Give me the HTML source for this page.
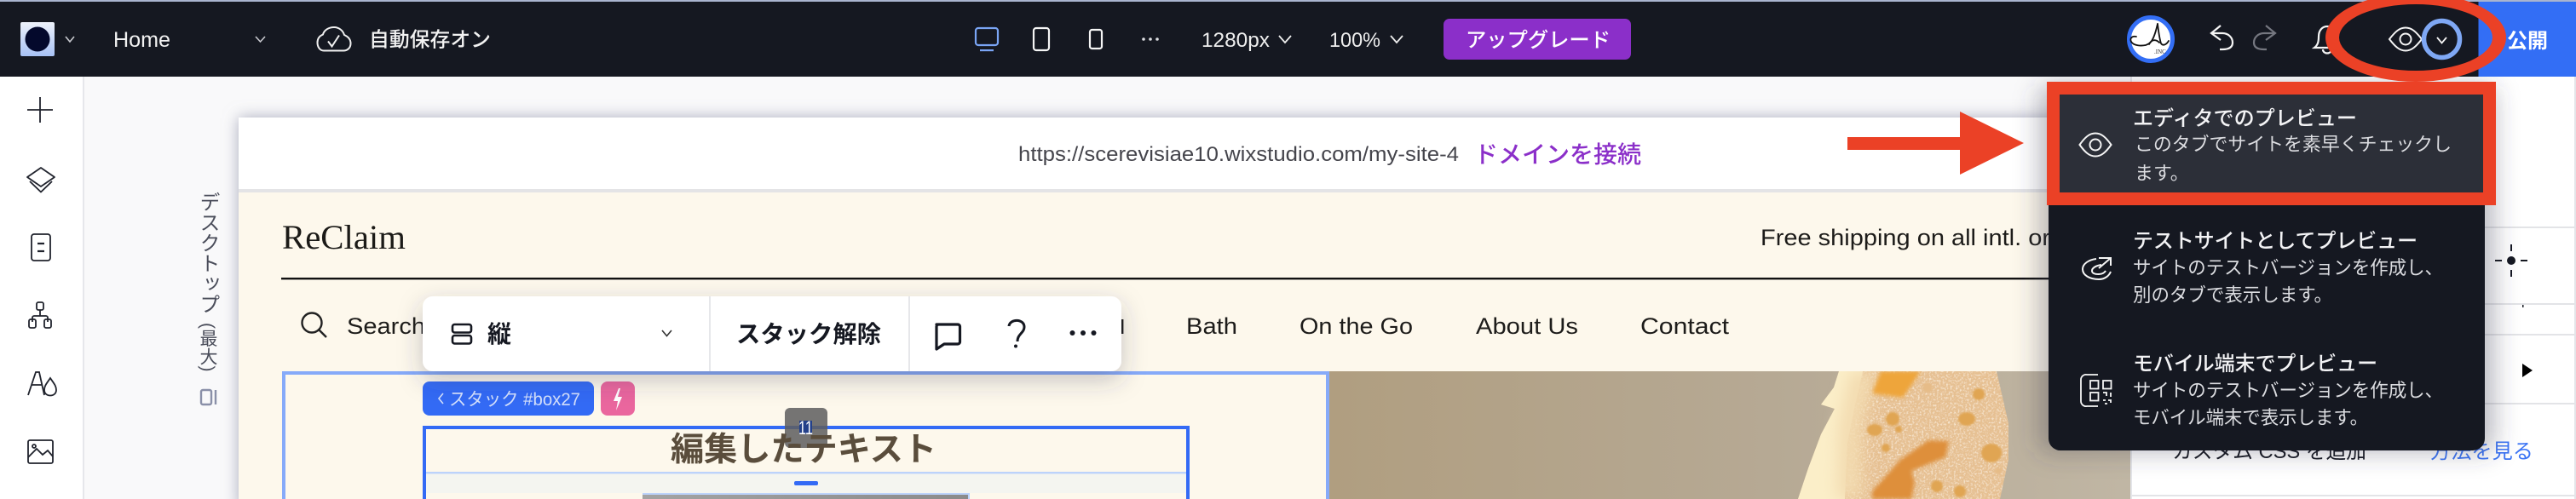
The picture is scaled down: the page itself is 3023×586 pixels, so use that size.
<!DOCTYPE html>
<html lang="ja">
<head>
<meta charset="utf-8">
<title>Editor preview</title>
<style>
html,body{margin:0;padding:0;background:#fff;width:3023px;height:586px;overflow:hidden}
svg{position:absolute;left:0;top:0;display:block}
text{font-family:"Liberation Sans","Noto Sans CJK JP",sans-serif}
.v{position:absolute;left:228px;top:225px;writing-mode:vertical-rl;font:24px/30px "Liberation Sans","Noto Sans CJK JP",sans-serif;color:#4a4d5a;white-space:nowrap}
.v span{font-size:21px;margin-top:10px;letter-spacing:.5px}
</style>
</head>
<body>
<svg width="3023" height="586" viewBox="0 0 3023 586" xmlns="http://www.w3.org/2000/svg">
<defs>
<filter id="fs" x="-5%" y="-20%" width="110%" height="140%"><feDropShadow dx="0" dy="0" stdDeviation="9" flood-color="#8f91a8" flood-opacity=".75"/></filter>
<filter id="ts" x="-15%" y="-40%" width="130%" height="200%"><feDropShadow dx="0" dy="10" stdDeviation="14" flood-color="#3a3d50" flood-opacity=".28"/></filter>
<filter id="ms" x="-15%" y="-15%" width="130%" height="130%"><feGaussianBlur stdDeviation="14"/></filter>
<filter id="b1"><feGaussianBlur stdDeviation="1"/></filter>
<filter id="b2"><feGaussianBlur stdDeviation="2.5"/></filter>
<filter id="b5" x="-60%" y="-20%" width="220%" height="140%"><feGaussianBlur stdDeviation="9"/></filter>
<filter id="grain" x="0" y="0" width="100%" height="100%"><feTurbulence type="fractalNoise" baseFrequency=".45" numOctaves="2" seed="4" result="n"/><feColorMatrix in="n" type="matrix" values="0 0 0 0 1 0 0 0 0 .93 0 0 0 0 .8 0 0 0 2 -.95" result="g"/><feComposite in="g" in2="SourceAlpha" operator="in" result="g2"/><feMerge><feMergeNode in="SourceGraphic"/><feMergeNode in="g2"/></feMerge></filter>
<linearGradient id="lg" x1="0" y1="0" x2="0" y2="1"><stop offset="0" stop-color="#eef2fb"/><stop offset="1" stop-color="#a8c2f5"/></linearGradient>
<linearGradient id="bgimg" x1="0" y1="0" x2="1" y2="0"><stop offset="0" stop-color="#b09e80"/><stop offset=".55" stop-color="#b6a994"/><stop offset="1" stop-color="#c0b6a4"/></linearGradient>
<linearGradient id="grey" x1="0" y1="0" x2="1" y2="0"><stop offset="0" stop-color="#a3a3a3"/><stop offset="1" stop-color="#8b8b8b"/></linearGradient>
<clipPath id="clipimg"><rect x="1559" y="436" width="941" height="150"/></clipPath>
</defs>

<!-- canvas -->
<rect width="3023" height="586" fill="#f9f9fa"/>
<!-- left rail -->
<rect x="0" y="90" width="97" height="496" fill="#fff"/>
<rect x="97" y="90" width="2" height="496" fill="#e6e7eb"/>

<!-- site frame -->
<rect x="280" y="138" width="2225" height="460" fill="#fff" filter="url(#fs)"/>
<rect x="280" y="138" width="2225" height="84" fill="#fff"/>
<rect x="280" y="222" width="2225" height="4" fill="#e4e4e6"/>
<rect x="280" y="226" width="2225" height="360" fill="#fdf8ec"/>

<text x="1195" y="189" font-size="24" fill="#45454c" textLength="517" lengthAdjust="spacingAndGlyphs">https://scerevisiae10.wixstudio.com/my-site-4</text>
<text x="1730" y="191" font-size="28" font-weight="500" fill="#8b2fc9" textLength="196" lengthAdjust="spacingAndGlyphs">ドメインを接続</text>

<text x="331" y="292" font-size="40" fill="#1b1a17" style="font-family:'Liberation Serif',serif" textLength="145" lengthAdjust="spacingAndGlyphs">ReClaim</text>
<text x="2066" y="288" font-size="27" fill="#1d1c1a" textLength="340" lengthAdjust="spacingAndGlyphs">Free shipping on all intl. or</text>
<rect x="330" y="326" width="2170" height="2.4" fill="#111"/>

<!-- nav -->
<g fill="none" stroke="#222" stroke-width="2.4"><circle cx="366" cy="379" r="11.5"/><path d="M374.5 387.5L383 396"/></g>
<text x="407" y="392" font-size="27" fill="#1d1c1a" textLength="92" lengthAdjust="spacingAndGlyphs">Search</text>
<text x="1392" y="392" font-size="27" fill="#1d1c1a" textLength="60" lengthAdjust="spacingAndGlyphs">Bath</text>
<text x="1525" y="392" font-size="27" fill="#1d1c1a" textLength="133" lengthAdjust="spacingAndGlyphs">On the Go</text>
<text x="1732" y="392" font-size="27" fill="#1d1c1a" textLength="120" lengthAdjust="spacingAndGlyphs">About Us</text>
<text x="1925" y="392" font-size="27" fill="#1d1c1a" textLength="104" lengthAdjust="spacingAndGlyphs">Contact</text>
<rect x="1316" y="375" width="2.4" height="17" fill="#1d1c1a"/>

<!-- hero image -->
<g clip-path="url(#clipimg)">
<rect x="1559" y="436" width="941" height="150" fill="url(#bgimg)"/>
<path d="M2158 436L2152 455 2137 475 2153 480 2137 510 2122 550 2110 586H2347L2357 540 2357 497 2343 436Z" fill="#e6c092" filter="url(#grain)"/>
<path d="M2158 436L2152 455 2137 475 2153 480 2137 510 2122 550 2110 586H2165L2168 520 2176 480 2186 436Z" fill="#fbeec8"/>
<path d="M2172 436L2158 500 2156 586H2184L2184 500 2202 436Z" fill="#f3dbb0" filter="url(#b5)"/>
<path d="M2207 436L2197 462 2233 467 2246 448 2254 436Z" fill="#eea53b" filter="url(#b2)"/>
<path d="M2287 518L2263 517 2230 540 2197 577V586H2243L2247 567 2243 553 2283 537Z" fill="#de8f3b" filter="url(#b2)"/>
<g fill="#e0a552" filter="url(#b1)">
<ellipse cx="2308" cy="492" rx="10" ry="8"/><ellipse cx="2221" cy="492" rx="8" ry="8"/><ellipse cx="2200" cy="505" rx="9" ry="7"/><circle cx="2228" cy="504" r="4"/><ellipse cx="2337" cy="532" rx="12" ry="11"/><circle cx="2273" cy="571" r="7"/><circle cx="2300" cy="577" r="7"/><circle cx="2322" cy="463" r="7"/><circle cx="2213" cy="526" r="5"/><circle cx="2345" cy="553" r="4" fill="#e6bc88"/><circle cx="2262" cy="455" r="6" fill="#e6bc88"/>
</g>
</g>

<!-- selection frames -->
<rect x="333" y="438" width="1225" height="160" fill="none" stroke="#86aaf9" stroke-width="4"/>
<rect x="498" y="502" width="896" height="100" fill="none" stroke="#336af5" stroke-width="4"/>
<rect x="500" y="556" width="892" height="23" fill="#f4f5f0"/>
<rect x="500" y="554" width="892" height="2.4" fill="#bcd3fb"/>
<rect x="932" y="565" width="28" height="5" rx="2" fill="#336af5"/>
<rect x="754" y="579" width="383" height="12" fill="url(#grey)"/>
<path d="M754 580H1137V590" fill="none" stroke="#bcd3fb" stroke-width="2"/>
<rect x="921" y="479" width="50" height="47" rx="6" fill="#5e5e5e" fill-opacity=".86"/>
<rect x="938" y="494" width="15" height="16" fill="#23408a"/>
<text x="787" y="541" font-size="39" font-weight="700" fill="#5a4d3c" textLength="312" lengthAdjust="spacingAndGlyphs">編集したテキスト</text>
<text x="937" y="510" font-size="22" fill="#fff" textLength="17" lengthAdjust="spacingAndGlyphs">11</text>

<!-- tags -->
<rect x="496" y="448" width="201" height="40" rx="8" fill="#336af5"/>
<path d="M520 462l-5 6 5 6" fill="none" stroke="#d4e0fc" stroke-width="1.6"/>
<text x="527" y="476" font-size="21" fill="#d4e0fc" textLength="154" lengthAdjust="spacingAndGlyphs">スタック #box27</text>
<rect x="705" y="448" width="40" height="40" rx="8" fill="#ea669e"/>
<path d="M726 456l-6 15h5l-2 11 7-16h-5l3-10z" fill="#fff"/>

<!-- toolbar -->
<rect x="496" y="348" width="820" height="88" rx="12" fill="#fff" filter="url(#ts)"/>
<rect x="832" y="348" width="2" height="88" fill="#e6e7ea"/>
<rect x="1066" y="348" width="2" height="88" fill="#e6e7ea"/>
<g fill="none" stroke="#151821" stroke-width="2.6"><rect x="531" y="381" width="22" height="9.5" rx="2.5"/><rect x="531" y="394" width="22" height="9.5" rx="2.5"/></g>
<text x="572" y="402" font-size="28" font-weight="700" fill="#151821">縦</text>
<path d="M777 388l5.5 6.500 5.500-6.500" fill="none" stroke="#333" stroke-width="1.6"/>
<text x="864" y="402" font-size="28" font-weight="700" fill="#151821" textLength="170" lengthAdjust="spacingAndGlyphs">スタック解除</text>
<path d="M1099 381h25a2.500 2.500 0 0 1 2.500 2.500v18a2.500 2.500 0 0 1-2.500 2.500h-16l-9 6v-26.500a2.500 2.500 0 0 1 2.500-2.500z" fill="none" stroke="#151821" stroke-width="3.2" stroke-linejoin="round"/>
<path d="M1184 383c1-9 18-9 18 1 0 7-8 8-8 17" fill="none" stroke="#151821" stroke-width="3"/>
<circle cx="1192" cy="406.500" r="2" fill="#151821"/>
<g fill="#151821"><circle cx="1258.500" cy="391" r="3"/><circle cx="1271" cy="391" r="3"/><circle cx="1283.500" cy="391" r="3"/></g>

<!-- right panel -->
<rect x="2501" y="90" width="522" height="496" fill="#fff"/>
<rect x="2500" y="90" width="2" height="496" fill="#e4e5e9"/>
<rect x="3021" y="90" width="2" height="496" fill="#e4e5e9"/>
<g fill="#e3e4e7"><rect x="2502" y="266" width="519" height="2"/><rect x="2502" y="356" width="519" height="2"/><rect x="2502" y="392" width="519" height="2"/><rect x="2502" y="473" width="519" height="2"/><rect x="2502" y="581" width="519" height="2"/></g>
<g fill="#151821"><rect x="2946" y="287" width="2" height="8"/><rect x="2946" y="317" width="2" height="8"/><rect x="2928" y="305" width="8" height="2"/><rect x="2958" y="305" width="8" height="2"/><circle cx="2947" cy="306" r="5"/></g>
<rect x="2960" y="358" width="1.500" height="3" fill="#151821"/>
<path d="M2960 427L2972 435 2960 443Z" fill="#000"/>
<text x="2549" y="538" font-size="24" fill="#151821" textLength="228" lengthAdjust="spacingAndGlyphs">カスタム CSS を追加</text>
<text x="2852" y="538" font-size="24" fill="#3b74f5" textLength="121" lengthAdjust="spacingAndGlyphs">方法を見る</text>

<!-- dropdown shadow -->
<rect x="2392" y="100" width="536" height="432" rx="14" fill="#3a3d50" fill-opacity=".34" filter="url(#ms)"/>

<!-- top bar -->
<rect x="0" y="0" width="3023" height="2" fill="#a9b4cf"/>
<rect x="0" y="2" width="3023" height="88" fill="#151821"/>
<rect x="2908.500" y="2" width="114.500" height="88" fill="#336ef5"/>

<!-- logo -->
<rect x="24" y="26" width="40" height="40" rx="2" fill="url(#lg)"/>
<circle cx="44" cy="46" r="14.500" fill="#04092c"/>
<path d="M77 43l5 6 5-6" fill="none" stroke="#c9cad0" stroke-width="1.600"/>
<text x="133" y="55" font-size="25" fill="#f2f2f2" textLength="67" lengthAdjust="spacingAndGlyphs">Home</text>
<path d="M300 43l5.500 6 5.500-6" fill="none" stroke="#c9cad0" stroke-width="1.600"/>
<path d="M380 59.500C375 59.500 372.500 54.500 372.500 50C372.500 45 375.500 42 379 40.500C380.500 35 386 32 392 32C398 32 402.500 36 404 41C408.500 43 411.500 46.500 411.500 51C411.500 56 408 59.500 403 59.500Z" fill="none" stroke="#f0f0f0" stroke-width="2"/>
<path d="M385 48.500l4.500 6 8.500-13" fill="none" stroke="#f0f0f0" stroke-width="2"/>
<text x="433" y="54.500" font-size="24" font-weight="500" fill="#f2f2f2" textLength="143" lengthAdjust="spacingAndGlyphs">自動保存オン</text>

<!-- device icons -->
<rect x="1145" y="33" width="26" height="20" rx="3" fill="none" stroke="#7aa5f5" stroke-width="2.200"/>
<rect x="1150" y="58" width="16" height="2.200" fill="#7aa5f5"/>
<rect x="1213" y="33" width="18" height="26" rx="3" fill="none" stroke="#f5f5f5" stroke-width="2.200"/>
<rect x="1279" y="35" width="14" height="22" rx="2.500" fill="none" stroke="#f5f5f5" stroke-width="2.200"/>
<g fill="#dedfe3"><circle cx="1342" cy="46" r="1.800"/><circle cx="1350" cy="46" r="1.800"/><circle cx="1358" cy="46" r="1.800"/></g>
<text x="1410" y="55" font-size="24" fill="#eee" textLength="80" lengthAdjust="spacingAndGlyphs">1280px</text>
<path d="M1501 42l7 8 7-8" fill="none" stroke="#eee" stroke-width="1.800"/>
<text x="1560" y="55" font-size="24" fill="#eee" textLength="60" lengthAdjust="spacingAndGlyphs">100%</text>
<path d="M1632 42l7 8 7-8" fill="none" stroke="#eee" stroke-width="1.800"/>
<rect x="1694" y="22" width="220" height="48" rx="7" fill="#8b2fc9"/>
<text x="1720" y="55" font-size="24" font-weight="500" fill="#fff" textLength="170" lengthAdjust="spacingAndGlyphs">アップグレード</text>

<!-- avatar -->
<circle cx="2524" cy="46" r="25.500" fill="#fff" stroke="#336ef5" stroke-width="5"/>
<g fill="none" stroke="#111" stroke-width="1.800" stroke-linecap="round">
<path d="M2507 43C2502 42 2499 45 2501 49C2504 54 2513 54 2518 53C2523 51 2527 50 2532 28"/>
<path d="M2532 28C2533 36 2534 45 2536 51C2538 54 2542 53 2545 48"/>
<path d="M2522 52C2525 46 2530 46 2534 50"/>
</g>
<text x="2528" y="63" font-size="7" fill="#333" style="font-family:'Liberation Serif',serif">.INC</text>

<!-- undo/redo -->
<g fill="none" stroke="#f5f5f5" stroke-width="2.200"><path d="M2606 30l-11 9 11 8"/><path d="M2596 39h12c7 0 12 5 12 11s-5 8-12 8h-3"/></g>
<g fill="none" stroke="#757780" stroke-width="2.200"><path d="M2659 30l11 9-11 8"/><path d="M2669 39h-12c-7 0-12 5-12 11s5 8 12 8h3"/></g>
<!-- bell -->
<path d="M2716 56c4-3 5-7 5-13 0-7 4-12 10-12s10 5 10 12c0 6 1 10 5 13zM2726 58c0 6 10 6 10 0" fill="none" stroke="#f5f5f5" stroke-width="2.200"/>

<!-- eye + chevron -->
<g fill="none" stroke="#f5f5f5" stroke-width="2">
<path d="M2804 46C2811 37 2816 32.500 2823 32.500C2830 32.500 2835 37 2842 46C2835 55 2830 59.500 2823 59.500C2816 59.500 2811 55 2804 46Z"/>
<circle cx="2823" cy="46" r="6.500"/>
</g>
<ellipse cx="2865.500" cy="46" rx="21" ry="21.500" fill="#151821" stroke="#7fa8f5" stroke-width="5.500"/>
<path d="M2860 44l5.500 6.500 5.500-6.500" fill="none" stroke="#f5f5f5" stroke-width="1.800"/>
<text x="2942" y="56" font-size="24" font-weight="700" fill="#fff" textLength="48" lengthAdjust="spacingAndGlyphs">公開</text>

<!-- red ring -->
<path fill-rule="evenodd" fill="#eb4126" d="M2729 44a106 52 0 1 0 212 0a106 52 0 1 0-212 0ZM2745 44a90 39 0 1 1 180 0a90 39 0 1 1-180 0Z"/>

<!-- dropdown -->
<rect x="2404" y="100" width="512" height="429" rx="14" fill="#151821"/>
<rect x="2402" y="96" width="527" height="145" fill="#eb4126"/>
<rect x="2417" y="111" width="497" height="115" fill="#2c2f38"/>
<g fill="none" stroke="#f5f5f5" stroke-width="2">
<path d="M2440.500 170C2447 161 2452 156.500 2459 156.500C2466 156.500 2471 161 2477.500 170C2471 179 2466 183.500 2459 183.500C2452 183.500 2447 179 2440.500 170Z"/>
<circle cx="2459" cy="170" r="6.500"/>
</g>
<text x="2503" y="147" font-size="24" font-weight="500" fill="#f3f3f5" textLength="263" lengthAdjust="spacingAndGlyphs">エディタでのプレビュー</text>
<text x="2505" y="177" font-size="22" fill="#dcdde1" textLength="372" lengthAdjust="spacingAndGlyphs">このタブでサイトを素早くチェックし</text>
<text x="2505" y="211" font-size="22" fill="#dcdde1">ます。</text>

<g fill="none" stroke="#f5f5f5" stroke-width="2">
<path d="M2463 303h14v9M2477 303l-14 12"/>
<path d="M2460 304C2451 305 2444 310 2444 316C2444 323 2452 328 2463 328C2470 328 2475 324 2477 319"/>
<path d="M2466 311C2459 312 2455 315 2455 318C2455 321 2459 322 2463 322C2467 322 2470 320 2471 318"/>
</g>
<text x="2503" y="291" font-size="24" font-weight="500" fill="#f3f3f5" textLength="334" lengthAdjust="spacingAndGlyphs">テストサイトとしてプレビュー</text>
<text x="2503" y="322" font-size="22" fill="#dcdde1" textLength="364" lengthAdjust="spacingAndGlyphs">サイトのテストバージョンを作成し、</text>
<text x="2503" y="354" font-size="22" fill="#dcdde1" textLength="234" lengthAdjust="spacingAndGlyphs">別のタブで表示します。</text>

<g fill="none" stroke="#f5f5f5" stroke-width="1.800">
<path d="M2462 440h-13a6 6 0 0 0-7 6v25a6 6 0 0 0 7 6h13"/>
<rect x="2453" y="447" width="9.500" height="9.500"/><rect x="2468" y="447" width="9.500" height="9.500"/><rect x="2453" y="461" width="9.500" height="9.500"/>
<path d="M2468 461h4v4M2477 461v5M2468 470h3M2474 470h3v3M2470 474h3"/>
</g>
<text x="2503" y="435" font-size="24" font-weight="500" fill="#f3f3f5" textLength="287" lengthAdjust="spacingAndGlyphs">モバイル端末でプレビュー</text>
<text x="2503" y="466" font-size="22" fill="#dcdde1" textLength="364" lengthAdjust="spacingAndGlyphs">サイトのテストバージョンを作成し、</text>
<text x="2503" y="498" font-size="22" fill="#dcdde1" textLength="276" lengthAdjust="spacingAndGlyphs">モバイル端末で表示します。</text>

<!-- red arrow -->
<path d="M2168 161H2300V131L2375 168L2300 205V176H2168Z" fill="#eb4126"/>

<!-- left rail icons -->
<g fill="none" stroke="#20232d" stroke-width="1.800">
<path d="M47 114v30M32 129h30"/>
<path d="M48 197L64 208L48 219L32 208Z" stroke-linejoin="round"/><path d="M35 213L48 225.500L61 213" stroke-linejoin="round"/>
<rect x="37" y="275" width="22" height="31" rx="3"/><path d="M44 286h8M44 295h8" stroke-width="2.200"/>
<rect x="43" y="355" width="8" height="9" rx="2"/><path d="M47 364v7M38 378v-5a2 2 0 0 1 2-2h14a2 2 0 0 1 2 2v5"/><rect x="34" y="375" width="8" height="10" rx="2"/><rect x="52" y="375" width="8" height="10" rx="2"/>
<path d="M33 464L42 437 46 437 52 464M37 452H49"/>
<path d="M59 444C55 450 52 453 52 458C52 462 55 464.500 59 464.500C63 464.500 66 462 66 458C66 453 63 450 59 444Z"/>
<rect x="33" y="517" width="29" height="27" rx="2"/><path d="M33 537L43 527 50 534 56 529 62 536"/><circle cx="40" cy="524" r="2"/>
</g>

<!-- device label icon -->
<g fill="none" stroke="#8a90a8" stroke-width="2.400"><rect x="236" y="458" width="12" height="17" rx="2"/><path d="M253 458v17"/></g>
</svg>
<div class="v">デスクトップ<span>(最大)</span></div>
</body>
</html>
